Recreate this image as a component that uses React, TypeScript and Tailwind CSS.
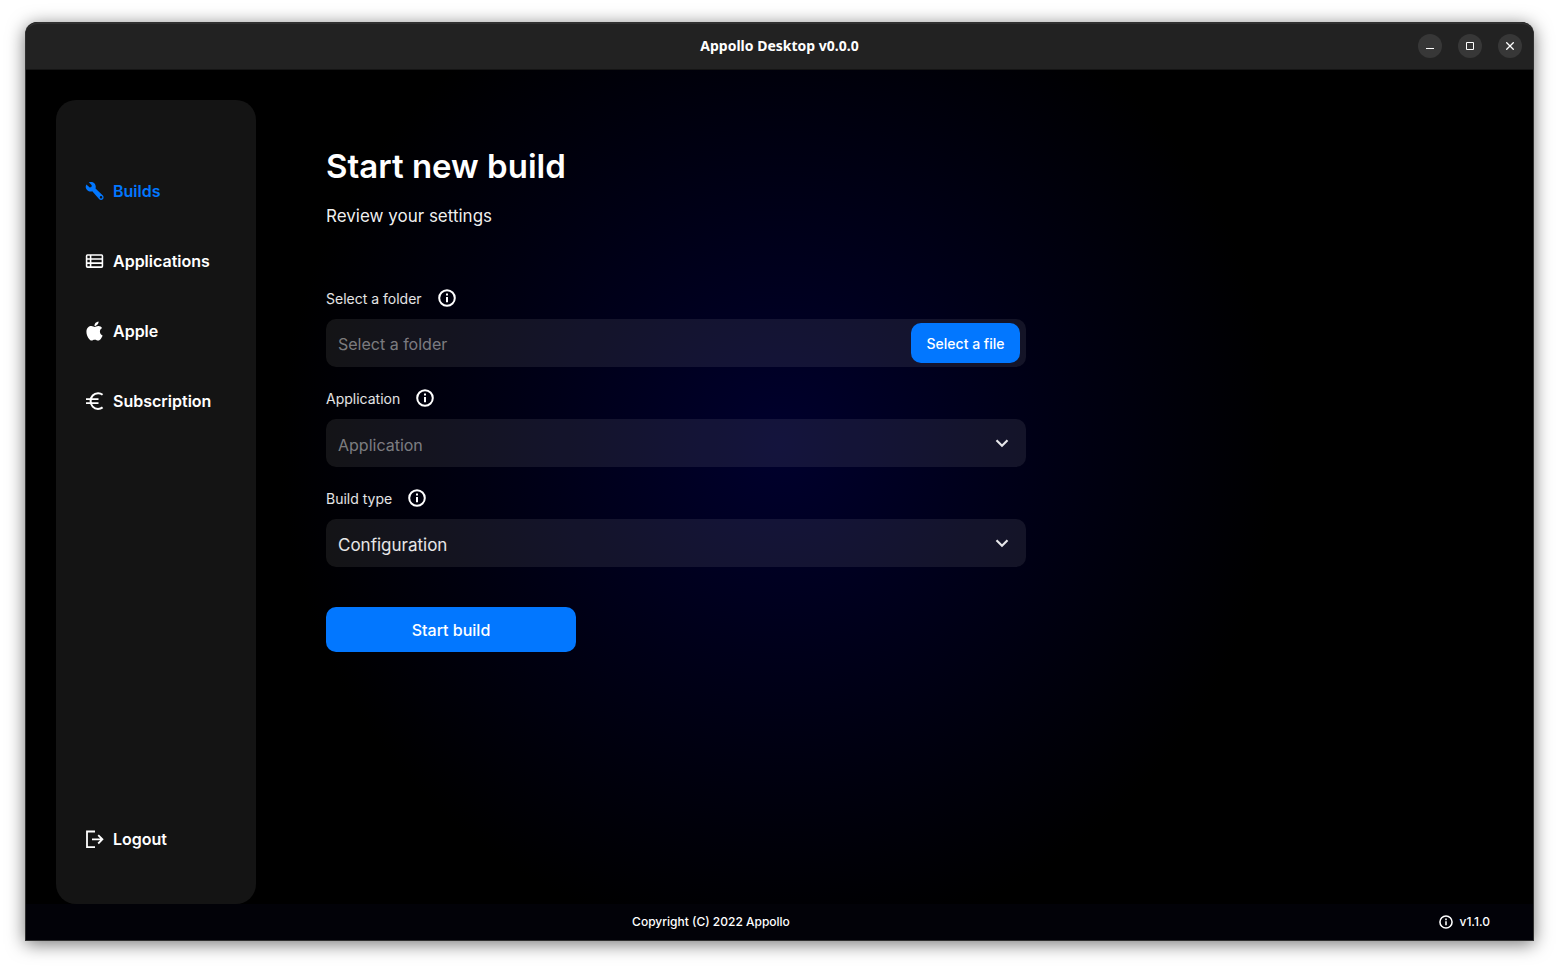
import React, { useState } from 'react';
import { FaApple } from 'react-icons/fa';

interface IconProps {
    className?: string;
}

const WrenchIcon = ({ className }: IconProps) => (
    <svg viewBox="0 0 18 18" fill="currentColor" fillRule="evenodd" className={className} aria-hidden="true">
        <path d="M3.6.3 6.4 3.1 6.1 4.8 4.5 5.2 1.3 2.3C.3 4 .5 6.2 2 7.6c1.4 1.4 3.2 1.7 4.9 1.2l6.6 7.500c.9.9 2.500.9 3.400 0 .9-.9.9-2.500 0-3.400L10 6.100c.5-1.800.1-3.700-1.200-5C7.400-.2 5.300-.5 3.600.3ZM15.200 13.300a1.200 1.200 0 1 1 0 2.400 1.200 1.200 0 0 1 0-2.400Z" />
    </svg>
);

const TableIcon = ({ className }: IconProps) => (
    <svg viewBox="0 0 18 18" fill="none" stroke="currentColor" strokeWidth="1.5" className={className} aria-hidden="true">
        <rect x="1.5" y="2.9" width="15" height="11.4" rx="0.8" />
        <path d="M1.5 6.700h15M1.500 10.500h15M5.300 2.900v11.400" />
    </svg>
);

const EuroIcon = ({ className }: IconProps) => (
    <svg viewBox="0 0 19 19" fill="none" stroke="currentColor" strokeWidth="2" className={className} aria-hidden="true">
        <path d="M17.600 2.800A7.400 7.400 0 0 0 13 1.300C8.700 1.300 5.600 4.600 5.600 9.100s3.100 7.800 7.400 7.800c1.700 0 3.300-.5 4.600-1.500" />
        <path d="M1 7.200h12.500M1 11.200h12.500" strokeWidth="1.800" />
    </svg>
);

const LogoutIcon = ({ className }: IconProps) => (
    <svg viewBox="0 0 19 19" fill="none" stroke="currentColor" strokeWidth="1.800" className={className} aria-hidden="true">
        <path d="M10 1.500H2v15.600h8" />
        <path d="M7 9.300h10M13.200 5.100l4.200 4.200-4.200 4.200" />
    </svg>
);

const InfoIcon = ({ className }: IconProps) => (
    <svg viewBox="0 0 18 18" fill="none" stroke="currentColor" strokeWidth="2" className={className} aria-hidden="true">
        <circle cx="9" cy="9" r="7.800" />
        <path d="M9 8v5.300M9 4.600v2" />
    </svg>
);

const ChevronIcon = () => (
    <svg
        viewBox="0 0 14 10"
        fill="none"
        stroke="#e6e6ea"
        strokeWidth="2.200"
        className="pointer-events-none absolute right-[17px] top-1/2 h-[10px] w-[14px] -translate-y-1/2"
        aria-hidden="true"
    >
        <path d="M1.500 2.200 7 7.700l5.500-5.500" />
    </svg>
);

const NAV_ITEMS = [
    { label: 'Builds', icon: WrenchIcon },
    { label: 'Applications', icon: TableIcon },
    { label: 'Apple', icon: FaApple },
    { label: 'Subscription', icon: EuroIcon },
];

interface FieldProps {
    id: string;
    label: string;
    children: React.ReactNode;
}

const Field: React.FC<FieldProps> = ({ id, label, children }) => (
    <div>
        <div className="flex h-[42px] items-center gap-4">
            <label htmlFor={id} className="pt-[2px] text-sm text-white/90">{label}</label>
            <button type="button" aria-label={`About ${label}`}>
                <InfoIcon className="h-[18px] w-[18px]" />
            </button>
        </div>
        <div className="relative flex h-12 items-center rounded-[10px] bg-white/8">{children}</div>
    </div>
);

const TitleBar = () => (
    <header className="grid h-12 grid-cols-[1fr_auto_1fr] items-center rounded-t-xl border-b border-[#151515] border-t-2 border-t-[#303030] bg-[#222] px-[11px] pb-[2px]">
        <h1 className="col-start-2 font-['Noto_Sans',sans-serif] text-sm font-bold">Appollo Desktop v0.0.0</h1>
        <div className="flex justify-end gap-4">
            <button aria-label="Minimize" className="flex h-6 w-6 items-center justify-center rounded-full bg-[#373737]">
                <svg viewBox="0 0 8 8" className="h-2 w-2" aria-hidden="true"><path d="M0 6.500h8" stroke="#fff" /></svg>
            </button>
            <button aria-label="Maximize" className="flex h-6 w-6 items-center justify-center rounded-full bg-[#373737]">
                <svg viewBox="0 0 8 8" className="h-2 w-2" aria-hidden="true"><path d="M.5.5h7v7h-7z" fill="none" stroke="#fff" /></svg>
            </button>
            <button aria-label="Close" className="flex h-6 w-6 items-center justify-center rounded-full bg-[#373737]">
                <svg viewBox="0 0 8 8" className="h-2 w-2" aria-hidden="true"><path d="m.3.3 7.400 7.400M7.700.3.3 7.700" stroke="#fff" strokeWidth="1.300" /></svg>
            </button>
        </div>
    </header>
);

const Sidebar = () => {
    const [active, setActive] = useState('Builds');

    return (
        <nav className="flex w-[200px] shrink-0 flex-col rounded-[20px] bg-[#141414] px-[29px] pb-[45px] pt-[71px]">
            <ul className="space-y-[30px]">
                {NAV_ITEMS.map(({ label, icon: Icon }) => (
                    <li key={label}>
                        <button
                            onClick={() => setActive(label)}
                            className={`flex h-10 items-center gap-[9px] text-base font-semibold ${active === label ? 'text-[#0277ff]' : 'text-white'}`}
                        >
                            <Icon className={label === 'Apple' ? 'h-[22px] w-[19px]' : 'h-[19px] w-[19px]'} />
                            {label}
                        </button>
                    </li>
                ))}
            </ul>
            <button className="mt-auto flex h-10 items-center gap-[9px] text-base font-semibold">
                <LogoutIcon className="h-[19px] w-[19px]" />
                Logout
            </button>
        </nav>
    );
};

const BuildForm = () => {
    const [folder, setFolder] = useState('');
    const [application, setApplication] = useState('');
    const [buildType, setBuildType] = useState('configuration');

    return (
        <form onSubmit={e => e.preventDefault()} className="w-full max-w-[700px] pt-11">
            <h2 className="text-[33px] font-semibold leading-[44px]">Start new build</h2>
            <p className="mt-[14px] text-[17px] leading-7 text-white/95">Review your settings</p>

            <div className="mt-[47px] space-y-[10px]">
                <Field id="folder" label="Select a folder">
                    <input
                        id="folder"
                        type="text"
                        value={folder}
                        onChange={e => setFolder(e.target.value)}
                        placeholder="Select a folder"
                        className="h-full min-w-0 flex-1 bg-transparent px-3 pt-[2px] text-base outline-none placeholder:text-white/45"
                    />
                    <button type="button" className="mr-[6px] h-10 w-[109px] rounded-[10px] bg-[#0277ff] pt-px text-sm font-medium">
                        Select a file
                    </button>
                </Field>
                <Field id="application" label="Application">
                    <select
                        id="application"
                        value={application}
                        onChange={e => setApplication(e.target.value)}
                        className="h-full w-full appearance-none bg-transparent px-3 pt-[3px] text-base text-white/45 outline-none"
                    >
                        <option value="">Application</option>
                    </select>
                    <ChevronIcon />
                </Field>
                <Field id="build-type" label="Build type">
                    <select
                        id="build-type"
                        value={buildType}
                        onChange={e => setBuildType(e.target.value)}
                        className="h-full w-full appearance-none bg-transparent px-3 pt-[5px] text-[17px] text-white/90 outline-none"
                    >
                        <option value="configuration">Configuration</option>
                    </select>
                    <ChevronIcon />
                </Field>
            </div>

            <button type="submit" className="mt-10 h-[45px] w-[250px] rounded-[10px] bg-[#0277ff] text-base font-medium">
                Start build
            </button>
        </form>
    );
};

export default function App() {
    return (
        <div className="flex min-h-screen bg-white px-[25px] pb-7 pt-[22px] font-['Inter',sans-serif] text-white">
            <div className="flex flex-1 flex-col rounded-t-xl border-x border-b border-[#303030] bg-black shadow-[0_3px_18px_rgba(0,0,0,0.55)]">
                <TitleBar />
                <div className="flex flex-1 gap-[70px] bg-[radial-gradient(circle_500px_at_50%_45%,#00002d,#000)] px-[30px] pt-[30px]">
                    <Sidebar />
                    <main className="min-w-0 flex-1">
                        <BuildForm />
                    </main>
                </div>
                <footer className="flex h-9 items-center bg-[#020208] text-xs font-medium">
                    <p className="flex-1 text-center">Copyright (C) 2022 Appollo</p>
                    <div className="flex w-[137px] justify-end pr-[43px]">
                        <a href="#version" className="flex items-center gap-[6px]">
                            <InfoIcon className="h-[14px] w-[14px]" />
                            v1.1.0
                        </a>
                    </div>
                </footer>
            </div>
        </div>
    );
}
